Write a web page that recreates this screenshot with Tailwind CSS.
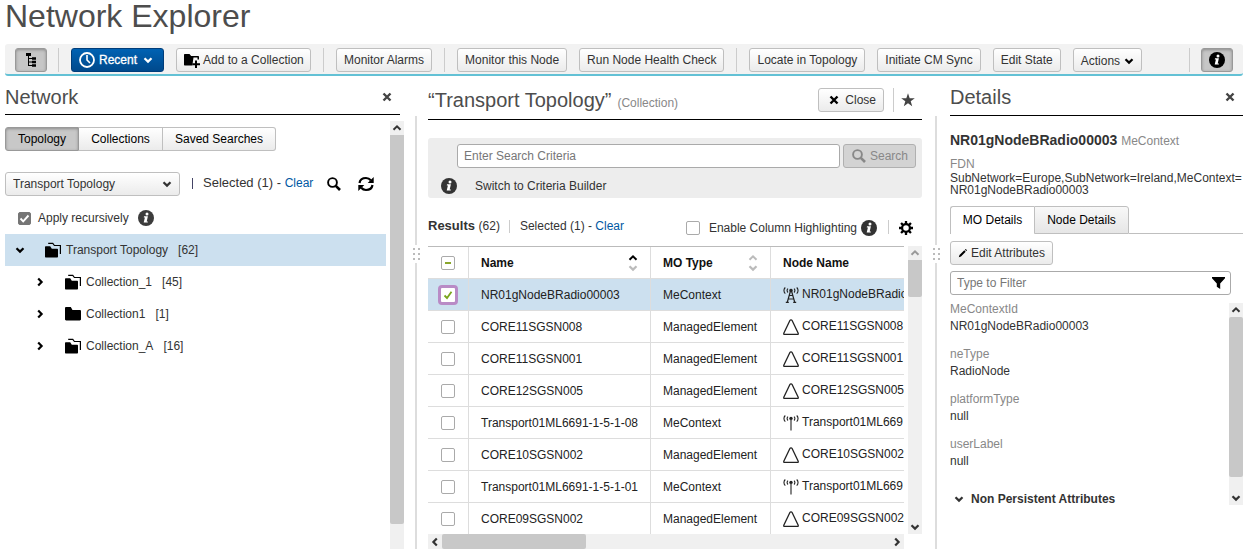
<!DOCTYPE html>
<html lang="en">
<head>
<meta charset="utf-8">
<meta name="viewport" content="width=device-width, initial-scale=1">
<title>Network Explorer</title>
<script src="https://cdn.jsdelivr.net/npm/@tailwindcss/browser@4"></script>
</head>
<body class="flex h-screen flex-col overflow-hidden bg-white font-['Liberation_Sans',Arial,sans-serif] text-[12px] leading-[16px] text-[#333]">

<svg class="hidden" aria-hidden="true">
  <symbol id="i-down" viewBox="0 0 10 10"><path d="M1.500 3.200 5 6.600 8.500 3.200" fill="none" stroke="currentColor" stroke-width="2.200"/></symbol>
  <symbol id="i-up" viewBox="0 0 10 10"><path d="M1.500 6.800 5 3.400 8.500 6.800" fill="none" stroke="currentColor" stroke-width="2"/></symbol>
  <symbol id="i-right" viewBox="0 0 10 10"><path d="M3.200 1.500 6.600 5 3.200 8.500" fill="none" stroke="currentColor" stroke-width="2.200"/></symbol>
  <symbol id="i-left" viewBox="0 0 10 10"><path d="M6.800 1.500 3.400 5 6.800 8.500" fill="none" stroke="currentColor" stroke-width="2.200"/></symbol>
  <symbol id="i-x" viewBox="0 0 10 10"><path d="M1.500 1.500 8.500 8.500M8.500 1.500 1.500 8.500" fill="none" stroke="currentColor" stroke-width="2.400"/></symbol>
  <symbol id="i-info" viewBox="0 0 16 16"><circle cx="8" cy="8" r="8" fill="currentColor"/><g fill="#fff"><circle cx="9" cy="3.900" r="1.500"/><path d="M6 6.300h3.900L8.700 11.400h1.100v1.200H5.700l1.200-5.100H5.800z"/></g></symbol>
  <symbol id="i-folder" viewBox="0 0 16 14"><path d="M0 1.200C0 .5.500 0 1.200 0h4.600L7.500 3H14.800c.7 0 1.200.5 1.200 1.200v8.100c0 .7-.5 1.200-1.200 1.200H1.200C.5 13.500 0 13 0 12.300z" fill="currentColor"/></symbol>
  <symbol id="i-folders" viewBox="0 0 16 16"><path d="M0 5.300c0-.6.400-1 1-1h4.200L6.800 6.800h5.200c.6 0 1 .4 1 1v6.700c0 .6-.4 1-1 1H1c-.6 0-1-.4-1-1z" fill="currentColor"/><path d="M3.200 1.400h4.600L9.400 3.500H15.400V12" fill="none" stroke="currentColor" stroke-width="1.200"/></symbol>
  <symbol id="i-folder-add" viewBox="0 0 16 15"><path d="M0 2c0-.6.400-1 1-1h4.500l1.600 2H14c.6 0 1 .4 1 1v2.500h-1.500V4.600H9.500L8.300 12.500H1c-.6 0-1-.4-1-1z" fill="currentColor"/><path d="M12 7.500v7.500M8.300 11.200H16" stroke="currentColor" stroke-width="2"/></symbol>
  <symbol id="i-search" viewBox="0 0 14 14"><circle cx="5.500" cy="5.500" r="4.400" fill="none" stroke="currentColor" stroke-width="1.900"/><path d="M8.800 8.800 13 13" stroke="currentColor" stroke-width="2.600"/></symbol>
  <symbol id="i-triangle" viewBox="0 0 16 16"><path d="M8 .8c.5 0 .9.300 1.100.7L15.100 14c.4.900 0 1.400-.8 1.400H1.700c-.8 0-1.200-.5-.8-1.400L6.900 1.500C7.100 1.100 7.500.8 8 .8z" fill="none" stroke="currentColor" stroke-width="1.300"/></symbol>
  <symbol id="i-waves" viewBox="0 0 16 16"><path d="M2.300.5C.5 2.200.5 5 2.300 6.600M5 1.600c-1.200 1-1.200 2.900 0 3.900M13.700.5c1.800 1.700 1.800 4.500 0 6.100M11 1.600c1.200 1 1.200 2.900 0 3.900" fill="none" stroke="currentColor" stroke-width="1.100"/><circle cx="8" cy="3.500" r="1.700" fill="currentColor"/></symbol>
  <symbol id="i-mast" viewBox="0 0 16 16"><use href="#i-waves"/><path d="M8 4v11.500" stroke="#444" stroke-width="1.300"/></symbol>
  <symbol id="i-tower" viewBox="0 0 16 16"><use href="#i-waves"/><path d="M7.500 4 4.200 15.500M8.500 4l3.300 11.500M6.500 8.500h3M5.500 12h5M2.800 15.300h3M10.200 15.300h3" fill="none" stroke="currentColor" stroke-width="1.200"/></symbol>
</svg>

<h1 class="px-[5px] text-[32px] leading-[32px] text-[#4d4d4d]">Network Explorer</h1>

<!-- Action bar -->
<div role="toolbar" aria-label="Actions" class="mt-3 ml-[5px] mr-px flex h-8 shrink-0 items-start whitespace-nowrap rounded-[3px] border-b-2 border-[#63c1d5] bg-[#f2f2f2] pt-1 pl-[10px] pr-[10px]">
  <button aria-label="Toggle network panel" aria-pressed="true" class="flex h-6 w-8 items-center justify-center rounded-[3px] border border-[#999] bg-[#c6c6c6] text-black shadow-[inset_0_1px_3px_rgba(0,0,0,0.3)]">
    <svg class="h-[14px] w-3" viewBox="0 0 12 14"><path d="M3.500 2v10.500M3 5.500h4M3 9h4M3 12.500h4" fill="none" stroke="currentColor"/><path d="M1 0h5v3H1zM7 4.300h4v2.400H7zM7 7.800h4v2.400H7zM7 11.300h4v2.400H7z" fill="currentColor"/></svg>
  </button>
  <span class="ml-[11px] h-6 w-px bg-[#ccc]"></span>
  <button class="ml-3 flex h-6 w-[93px] items-center rounded-[3px] border border-[#003d7a] bg-linear-to-b from-[#0062b3] to-[#00498c] pl-[7px] font-bold text-white">
    <svg class="size-4" viewBox="0 0 16 16"><circle cx="8" cy="8" r="7" fill="none" stroke="currentColor" stroke-width="1.800"/><path d="M8 3v5l3 3" fill="none" stroke="currentColor" stroke-width="1.600"/></svg>
    <span class="ml-1 font-normal [-webkit-text-stroke:0.3px_white]">Recent</span>
    <svg class="ml-[6px] size-[10px]"><use href="#i-down"/></svg>
  </button>
  <button class="ml-3 flex h-6 w-[135px] items-center rounded-[3px] border border-[#bfbfbf] bg-linear-to-b from-white to-[#ebebeb] pl-[7px]">
    <svg class="mr-[3px] h-[15px] w-4 text-black"><use href="#i-folder-add"/></svg>Add to a Collection
  </button>
  <span class="ml-3 h-6 w-px bg-[#ccc]"></span>
  <button class="ml-3 h-6 rounded-[3px] border border-[#bfbfbf] bg-linear-to-b from-white to-[#ebebeb] px-[7px]">Monitor Alarms</button>
  <span class="ml-3 h-6 w-px bg-[#ccc]"></span>
  <button class="ml-3 h-6 rounded-[3px] border border-[#bfbfbf] bg-linear-to-b from-white to-[#ebebeb] px-[7px]">Monitor this Node</button>
  <button class="ml-3 h-6 rounded-[3px] border border-[#bfbfbf] bg-linear-to-b from-white to-[#ebebeb] px-[7px]">Run Node Health Check</button>
  <span class="ml-3 h-6 w-px bg-[#ccc]"></span>
  <button class="ml-3 h-6 rounded-[3px] border border-[#bfbfbf] bg-linear-to-b from-white to-[#ebebeb] px-[7px]">Locate in Topology</button>
  <button class="ml-3 h-6 rounded-[3px] border border-[#bfbfbf] bg-linear-to-b from-white to-[#ebebeb] px-[7px]">Initiate CM Sync</button>
  <button class="ml-3 h-6 rounded-[3px] border border-[#bfbfbf] bg-linear-to-b from-white to-[#ebebeb] px-[7px]">Edit State</button>
  <button class="ml-3 flex h-6 items-center rounded-[3px] border border-[#bfbfbf] bg-linear-to-b from-white to-[#ebebeb] px-[7px] pt-[2px]">Actions<svg class="ml-1 size-[10px] text-black"><use href="#i-down"/></svg></button>
  <span class="ml-auto h-6 w-px bg-[#ccc]"></span>
  <button aria-label="Toggle details panel" aria-pressed="true" class="ml-[11px] flex h-6 w-8 items-center justify-center rounded-[3px] border border-[#999] bg-[#c6c6c6] text-black shadow-[inset_0_1px_3px_rgba(0,0,0,0.3)]"><svg class="size-4"><use href="#i-info"/></svg></button>
</div>

<main class="flex min-h-0 flex-1 pl-[5px] pr-px">

  <!-- Network panel -->
  <section class="flex w-[399px] shrink-0 flex-col" aria-labelledby="network-title">
    <header class="mr-1 flex h-[39px] shrink-0 items-center border-b border-black pt-1">
      <h2 id="network-title" class="text-[20px] leading-6 text-[#4d4d4d]">Network</h2>
      <button aria-label="Close network panel" class="ml-auto mr-2 text-[#444]"><svg class="size-[10px]"><use href="#i-x"/></svg></button>
    </header>
    <div class="mt-[6px] flex min-h-0 flex-1">
      <div class="mr-1 flex-1 pt-[6px]">
        <div class="flex h-6 w-max text-black" role="tablist">
          <button role="tab" aria-selected="true" class="w-[74px] rounded-l-[3px] border border-[#999] bg-[#c8c8c8] shadow-[inset_0_1px_3px_rgba(0,0,0,0.3)]">Topology</button>
          <button role="tab" class="w-[84px] border-y border-r border-[#bfbfbf] bg-linear-to-b from-white to-[#ebebeb]">Collections</button>
          <button role="tab" class="w-[113px] rounded-r-[3px] border-y border-r border-[#bfbfbf] bg-linear-to-b from-white to-[#ebebeb]">Saved Searches</button>
        </div>
        <div class="mt-[21px] flex h-6 items-center">
          <div class="grid w-[175px]">
            <select aria-label="Topology" class="col-start-1 row-start-1 h-6 w-full appearance-none rounded-[3px] border border-[#bfbfbf] bg-linear-to-b from-white to-[#ebebeb] pl-[7px] pr-6"><option>Transport Topology</option></select>
            <svg class="pointer-events-none col-start-1 row-start-1 mr-2 size-[10px] place-self-center justify-self-end"><use href="#i-down"/></svg>
          </div>
          <span class="ml-3 mb-[2px] h-[11px] w-px bg-[#446]"></span>
          <p class="ml-[10px] mb-[2px] text-[13px]">Selected (1) - <a href="#" class="text-[12px] text-[#0058a3]">Clear</a></p>
          <button aria-label="Search" class="ml-[14px] text-black"><svg class="size-[14px]"><use href="#i-search"/></svg></button>
          <button aria-label="Refresh" class="ml-[17px] text-black"><svg class="size-4" viewBox="0 0 16 16"><path d="M1.500 7C2 3.800 4.700 2 8 2c2 0 3.600.8 4.800 2.200M14.500 9c-.5 3.200-3.200 5-6.500 5-2 0-3.600-.8-4.800-2.200" fill="none" stroke="currentColor" stroke-width="2.200"/><path d="M15.700 1v6H9.700zM.3 15V9h6z" fill="currentColor"/></svg></button>
        </div>
        <div class="mt-[14px] flex h-4 items-center">
          <label class="flex items-center"><span class="ml-[13px] mr-[7px] grid size-[13px] place-items-center"><input type="checkbox" checked class="col-start-1 row-start-1 size-[13px] appearance-none rounded-[2px] border border-[#767676] checked:bg-[#757575]"><svg class="pointer-events-none col-start-1 row-start-1 size-[11px] text-white" viewBox="0 0 11 11"><path d="M1.500 5.500 4.200 8.300 9.500 2.500" fill="none" stroke="currentColor" stroke-width="1.900"/></svg></span>Apply recursively</label>
          <svg class="ml-[9px] size-4 text-[#3c3c3c]"><use href="#i-info"/></svg>
        </div>
        <ul class="mt-[8px]">
          <li class="flex h-8 items-center bg-[#cce0ef] pl-[10px]">
            <button aria-label="Collapse" class="text-black"><svg class="size-[10px]"><use href="#i-down"/></svg></button>
            <svg class="ml-5 size-4 text-black"><use href="#i-folders"/></svg><span class="ml-[5px]">Transport Topology</span><span class="ml-[10px]">[62]</span>
          </li>
          <li class="flex h-8 items-center pl-[30px]">
            <button aria-label="Expand" class="text-black"><svg class="size-[10px]"><use href="#i-right"/></svg></button>
            <svg class="ml-5 size-4 text-black"><use href="#i-folders"/></svg><span class="ml-[5px]">Collection_1</span><span class="ml-[10px]">[45]</span>
          </li>
          <li class="flex h-8 items-center pl-[30px]">
            <button aria-label="Expand" class="text-black"><svg class="size-[10px]"><use href="#i-right"/></svg></button>
            <svg class="ml-5 h-[14px] w-4 text-black"><use href="#i-folder"/></svg><span class="ml-[5px]">Collection1</span><span class="ml-[10px]">[1]</span>
          </li>
          <li class="flex h-8 items-center pl-[30px]">
            <button aria-label="Expand" class="text-black"><svg class="size-[10px]"><use href="#i-right"/></svg></button>
            <svg class="ml-5 size-4 text-black"><use href="#i-folders"/></svg><span class="ml-[5px]">Collection_A</span><span class="ml-[10px]">[16]</span>
          </li>
        </ul>
      </div>
      <div class="flex w-[14px] flex-col bg-[#f0f0f0]">
        <div class="grid h-[14px] place-items-center"><svg class="size-[10px]"><use href="#i-up"/></svg></div>
        <div class="h-[389px] rounded-b-[2px] bg-[#c8c8c8]"></div>
      </div>
    </div>
  </section>

  <!-- Splitter -->
  <div class="flex w-6 shrink-0 flex-col items-center pt-10">
    <div class="h-[129px] w-[2px] bg-[#ddd]"></div>
    <div class="my-[3px] grid grid-cols-2 gap-x-[3px] gap-y-[3px]"><i class="size-[2px] bg-[#bbb]"></i><i class="size-[2px] bg-[#bbb]"></i><i class="size-[2px] bg-[#bbb]"></i><i class="size-[2px] bg-[#bbb]"></i><i class="size-[2px] bg-[#bbb]"></i><i class="size-[2px] bg-[#bbb]"></i></div>
    <div class="w-[2px] flex-1 bg-[#ddd]"></div>
  </div>

  <!-- Results panel -->
  <section class="flex min-w-0 flex-1 flex-col" aria-labelledby="results-title">
    <header class="flex h-11 shrink-0 items-center border-b border-black pr-[7px] pt-[5px]">
      <h2 id="results-title" class="text-[20px] leading-6 text-[#4d4d4d]">“Transport Topology”</h2>
      <span class="ml-[6px] mt-[5px] text-[#888]">(Collection)</span>
      <button class="ml-auto flex h-6 items-center rounded-[3px] border border-[#bfbfbf] bg-linear-to-b from-white to-[#ebebeb] px-[7px]"><svg class="mx-[3px] size-[10px] text-black"><use href="#i-x"/></svg><span class="ml-[3px]">Close</span></button>
      <span class="ml-[9px] h-6 w-px bg-[#ccc]"></span>
      <button aria-label="Favourite" class="ml-[7px] text-[#444]"><svg class="size-[14px]" viewBox="0 0 14 14"><path d="M7 .3 8.700 5.200H13.800L9.700 8.300 11.200 13.300 7 10.300 2.800 13.300 4.300 8.300.2 5.200H5.300z" fill="currentColor"/></svg></button>
    </header>

    <form class="mt-[18px] h-[60px] shrink-0 rounded-[3px] bg-[#ededed] pl-[13px] pr-[6px] pt-[6px]">
      <div class="flex gap-[3px] pl-4">
        <input type="text" aria-label="Search criteria" placeholder="Enter Search Criteria" class="h-6 min-w-0 flex-1 rounded-[3px] border border-[#aaa] bg-white px-[6px] placeholder:text-[#777]">
        <button type="button" disabled class="flex h-6 w-[73px] items-center rounded-[3px] border border-[#b0b0b0] bg-[#d3d3d3] pl-2 text-[#888]"><svg class="mr-1 size-[14px]"><use href="#i-search"/></svg>Search</button>
      </div>
      <div class="mt-[10px] flex items-center"><svg class="size-4 text-[#333]"><use href="#i-info"/></svg><button type="button" class="ml-[18px]">Switch to Criteria Builder</button></div>
    </form>

    <div class="mt-[18px] flex h-[30px] shrink-0 items-start whitespace-nowrap pr-[9px]">
      <h3 class="mt-[2px] text-[13px]"><b>Results</b> <span class="text-[12px]">(62)</span></h3>
      <span class="ml-[9px] mt-1 h-[13px] w-px bg-[#ccc]"></span>
      <p class="ml-[10px] mt-[2px]">Selected (1) - <a href="#" class="text-[#0058a3]">Clear</a></p>
      <label class="ml-auto mt-1 flex items-center"><input type="checkbox" class="mr-[9px] size-[14px] appearance-none rounded-[2px] border border-[#aaa] bg-white">Enable Column Highlighting</label>
      <svg class="ml-1 mt-1 size-4 text-[#333]"><use href="#i-info"/></svg>
      <span class="ml-[11px] mt-1 h-[14px] w-px bg-[#ccc]"></span>
      <button aria-label="Table settings" class="ml-[10px] mt-[5px] text-black"><svg class="size-[14px]" viewBox="0 0 14 14"><circle cx="7" cy="7" r="3.900" fill="none" stroke="currentColor" stroke-width="2.200"/><path d="M7 0v3M7 11v3M0 7h3M11 7h3M2.050 2.050l2.100 2.100M9.850 9.850l2.100 2.100M11.950 2.050l-2.100 2.100M4.150 9.850l-2.100 2.100" stroke="currentColor" stroke-width="2.300"/></svg></button>
    </div>

    <div class="flex min-h-0 flex-1">
      <div class="flex min-w-0 flex-1 flex-col">
        <div class="min-h-0 flex-1 overflow-hidden border-t border-[#bbb]">
          <table class="w-full table-fixed border-separate border-spacing-0 whitespace-nowrap text-left text-[#222]">
            <colgroup><col class="w-[41px]"><col class="w-[182px]"><col class="w-[120px]"><col></colgroup>
            <thead>
              <tr class="h-8 text-[#111] *:border-b *:border-[#ddd] *:p-0">
                <th class="border-r"><span class="ml-[13px] grid size-[14px] place-items-center rounded-[2px] border border-[#aaa]"><input type="checkbox" aria-label="Select all" class="col-start-1 row-start-1 size-3 appearance-none"><i class="pointer-events-none col-start-1 row-start-1 h-[2px] w-[6px] bg-[#89a62d]"></i></span></th>
                <th class="border-r"><div class="flex items-center justify-between pl-3 pr-3">Name<span class="flex flex-col text-black"><svg class="size-[10px]"><use href="#i-up"/></svg><svg class="size-[10px] text-[#bbb]"><use href="#i-down"/></svg></span></div></th>
                <th class="border-r"><div class="flex items-center justify-between pl-3 pr-3">MO Type<span class="flex flex-col text-[#bbb]"><svg class="size-[10px]"><use href="#i-up"/></svg><svg class="size-[10px]"><use href="#i-down"/></svg></span></div></th>
                <th><div class="pl-3">Node Name</div></th>
              </tr>
            </thead>
            <tbody>
              <tr class="h-8 bg-[#cce0ef] *:border-b *:border-[#ddd] *:p-0">
                <td class="border-r"><span class="ml-[10px] grid size-5 place-items-center rounded-[4px] border-3 border-[#b98bc6] bg-white"><input type="checkbox" checked aria-label="Select NR01gNodeBRadio00003" class="col-start-1 row-start-1 size-3 appearance-none"><svg class="pointer-events-none col-start-1 row-start-1 size-[10px]" viewBox="0 0 10 10"><path d="M1.500 5.500 4 8 8.500 1.800" fill="none" stroke="#7aa51d" stroke-width="1.800"/></svg></span></td>
                <td class="border-r"><div class="pl-3">NR01gNodeBRadio00003</div></td><td class="border-r"><div class="pl-3">MeContext</div></td>
                <td><div class="flex items-center overflow-hidden pl-3"><svg class="mr-[3px] size-4 shrink-0"><use href="#i-tower"/></svg><span class="pb-[2px]">NR01gNodeBRadio00003</span></div></td>
              </tr>
              <tr class="h-8 *:border-b *:border-[#ddd] *:p-0">
                <td class="border-r"><input type="checkbox" aria-label="Select CORE11SGSN008" class="ml-[13px] block size-[14px] appearance-none rounded-[2px] border border-[#aaa]"></td>
                <td class="border-r"><div class="pl-3">CORE11SGSN008</div></td><td class="border-r"><div class="pl-3">ManagedElement</div></td>
                <td><div class="flex items-center overflow-hidden pl-3"><svg class="mr-[3px] size-4 shrink-0"><use href="#i-triangle"/></svg><span class="pb-[2px]">CORE11SGSN008</span></div></td>
              </tr>
              <tr class="h-8 *:border-b *:border-[#ddd] *:p-0">
                <td class="border-r"><input type="checkbox" aria-label="Select CORE11SGSN001" class="ml-[13px] block size-[14px] appearance-none rounded-[2px] border border-[#aaa]"></td>
                <td class="border-r"><div class="pl-3">CORE11SGSN001</div></td><td class="border-r"><div class="pl-3">ManagedElement</div></td>
                <td><div class="flex items-center overflow-hidden pl-3"><svg class="mr-[3px] size-4 shrink-0"><use href="#i-triangle"/></svg><span class="pb-[2px]">CORE11SGSN001</span></div></td>
              </tr>
              <tr class="h-8 *:border-b *:border-[#ddd] *:p-0">
                <td class="border-r"><input type="checkbox" aria-label="Select CORE12SGSN005" class="ml-[13px] block size-[14px] appearance-none rounded-[2px] border border-[#aaa]"></td>
                <td class="border-r"><div class="pl-3">CORE12SGSN005</div></td><td class="border-r"><div class="pl-3">ManagedElement</div></td>
                <td><div class="flex items-center overflow-hidden pl-3"><svg class="mr-[3px] size-4 shrink-0"><use href="#i-triangle"/></svg><span class="pb-[2px]">CORE12SGSN005</span></div></td>
              </tr>
              <tr class="h-8 *:border-b *:border-[#ddd] *:p-0">
                <td class="border-r"><input type="checkbox" aria-label="Select Transport01ML6691-1-5-1-08" class="ml-[13px] block size-[14px] appearance-none rounded-[2px] border border-[#aaa]"></td>
                <td class="border-r"><div class="pl-3">Transport01ML6691-1-5-1-08</div></td><td class="border-r"><div class="pl-3">MeContext</div></td>
                <td><div class="flex items-center overflow-hidden pl-3"><svg class="mr-[3px] size-4 shrink-0"><use href="#i-mast"/></svg><span class="pb-[2px]">Transport01ML669</span></div></td>
              </tr>
              <tr class="h-8 *:border-b *:border-[#ddd] *:p-0">
                <td class="border-r"><input type="checkbox" aria-label="Select CORE10SGSN002" class="ml-[13px] block size-[14px] appearance-none rounded-[2px] border border-[#aaa]"></td>
                <td class="border-r"><div class="pl-3">CORE10SGSN002</div></td><td class="border-r"><div class="pl-3">ManagedElement</div></td>
                <td><div class="flex items-center overflow-hidden pl-3"><svg class="mr-[3px] size-4 shrink-0"><use href="#i-triangle"/></svg><span class="pb-[2px]">CORE10SGSN002</span></div></td>
              </tr>
              <tr class="h-8 *:border-b *:border-[#ddd] *:p-0">
                <td class="border-r"><input type="checkbox" aria-label="Select Transport01ML6691-1-5-1-01" class="ml-[13px] block size-[14px] appearance-none rounded-[2px] border border-[#aaa]"></td>
                <td class="border-r"><div class="pl-3">Transport01ML6691-1-5-1-01</div></td><td class="border-r"><div class="pl-3">MeContext</div></td>
                <td><div class="flex items-center overflow-hidden pl-3"><svg class="mr-[3px] size-4 shrink-0"><use href="#i-mast"/></svg><span class="pb-[2px]">Transport01ML669</span></div></td>
              </tr>
              <tr class="h-8 *:border-b *:border-[#ddd] *:p-0">
                <td class="border-r"><input type="checkbox" aria-label="Select CORE09SGSN002" class="ml-[13px] block size-[14px] appearance-none rounded-[2px] border border-[#aaa]"></td>
                <td class="border-r"><div class="pl-3">CORE09SGSN002</div></td><td class="border-r"><div class="pl-3">ManagedElement</div></td>
                <td><div class="flex items-center overflow-hidden pl-3"><svg class="mr-[3px] size-4 shrink-0"><use href="#i-triangle"/></svg><span class="pb-[2px]">CORE09SGSN002</span></div></td>
              </tr>
            </tbody>
          </table>
        </div>
        <div class="flex h-[15px] shrink-0 items-center bg-[#f0f0f0]">
          <div class="grid w-[14px] place-items-center"><svg class="size-[10px]"><use href="#i-left"/></svg></div>
          <div class="h-full w-36 rounded-[2px] bg-[#c8c8c8]"></div>
          <div class="ml-auto grid w-[14px] place-items-center"><svg class="size-[10px]"><use href="#i-right"/></svg></div>
        </div>
      </div>
      <div class="ml-1 mb-[15px] flex w-[14px] flex-col bg-[#f0f0f0]">
        <div class="grid h-[14px] place-items-center text-[#999]"><svg class="size-[10px]"><use href="#i-up"/></svg></div>
        <div class="h-[37px] rounded-b-[2px] bg-[#c8c8c8]"></div>
        <div class="mt-auto grid h-[14px] place-items-center"><svg class="size-[10px]"><use href="#i-down"/></svg></div>
      </div>
    </div>
  </section>

  <!-- Splitter -->
  <div class="flex w-7 shrink-0 flex-col items-center pt-10">
    <div class="h-[129px] w-[2px] bg-[#ddd]"></div>
    <div class="my-[3px] grid grid-cols-2 gap-x-[3px] gap-y-[3px]"><i class="size-[2px] bg-[#bbb]"></i><i class="size-[2px] bg-[#bbb]"></i><i class="size-[2px] bg-[#bbb]"></i><i class="size-[2px] bg-[#bbb]"></i><i class="size-[2px] bg-[#bbb]"></i><i class="size-[2px] bg-[#bbb]"></i></div>
    <div class="w-[2px] flex-1 bg-[#ddd]"></div>
  </div>

  <!-- Details panel -->
  <section class="flex w-[293px] shrink-0 flex-col" aria-labelledby="details-title">
    <header class="flex h-10 shrink-0 items-center border-b border-black pt-[3px]">
      <h2 id="details-title" class="text-[20px] leading-6 text-[#4d4d4d]">Details</h2>
      <button aria-label="Close details panel" class="ml-auto mr-2 text-[#444]"><svg class="size-[10px]"><use href="#i-x"/></svg></button>
    </header>
    <h3 class="mt-[15px] text-[14px] leading-[18px]"><b>NR01gNodeBRadio00003</b> <span class="text-[12px] text-[#888]">MeContext</span></h3>
    <p class="mt-2 leading-3 text-[#888]">FDN</p>
    <p class="mt-[2px] leading-3">SubNetwork=Europe,SubNetwork=Ireland,MeContext=<br>NR01gNodeBRadio00003</p>
    <div role="tablist" class="mt-[10px] flex h-7 shrink-0 text-black">
      <button role="tab" aria-selected="true" class="w-[84px] rounded-tl-[3px] border-l border-t border-[#bfbfbf] bg-white pb-px">MO Details</button>
      <button role="tab" class="w-[95px] rounded-tr-[3px] border border-[#bfbfbf] bg-linear-to-b from-[#f8f8f8] to-[#e6e6e6]">Node Details</button>
      <span class="flex-1 border-b border-[#bfbfbf]"></span>
    </div>
    <button class="mt-[7px] flex h-6 w-max shrink-0 items-center rounded-[3px] border border-[#bfbfbf] bg-linear-to-b from-white to-[#ebebeb] px-[7px]"><svg class="mr-[3px] size-[10px] text-black" viewBox="0 0 10 10"><path d="M.8 9.200 1.500 7 6.300 2.300 7.700 3.700 3 8.500zM6.900 1.700 7.700.9 9.100 2.300 8.300 3.100z" fill="currentColor"/></svg>Edit Attributes</button>
    <div class="mt-[6px] mr-3 grid">
      <input type="text" aria-label="Filter attributes" placeholder="Type to Filter" class="col-start-1 row-start-1 h-6 w-full rounded-[3px] border border-[#aaa] bg-white pl-[6px] pr-6 placeholder:text-[#777]">
      <svg class="pointer-events-none col-start-1 row-start-1 mr-[6px] h-3 w-[13px] self-center justify-self-end text-black" viewBox="0 0 13 12"><path d="M0 0h13v1.200L8.200 6.500V12L4.800 9.800V6.500L0 1.200z" fill="currentColor"/></svg>
    </div>
    <div class="mt-[6px] flex min-h-0 flex-1 items-start">
      <div class="flex-1">
        <dl>
          <dt class="text-[#888]">MeContextId</dt><dd class="mt-px mb-3">NR01gNodeBRadio00003</dd>
          <dt class="text-[#888]">neType</dt><dd class="mt-px mb-3">RadioNode</dd>
          <dt class="text-[#888]">platformType</dt><dd class="mt-px mb-3">null</dd>
          <dt class="text-[#888]">userLabel</dt><dd class="mt-px">null</dd>
        </dl>
        <button class="mt-[22px] ml-1 flex items-center font-bold"><svg class="size-[10px]"><use href="#i-down"/></svg><span class="ml-[7px]">Non Persistent Attributes</span></button>
      </div>
      <div class="mt-[2px] flex h-[202px] w-[14px] flex-col bg-[#f0f0f0]">
        <div class="grid h-[14px] place-items-center"><svg class="size-[10px]"><use href="#i-up"/></svg></div>
        <div class="h-[160px] rounded-[2px] bg-[#c8c8c8]"></div>
        <div class="mt-auto grid h-[14px] place-items-center"><svg class="size-[10px]"><use href="#i-down"/></svg></div>
      </div>
    </div>
  </section>
</main>
</body>
</html>
